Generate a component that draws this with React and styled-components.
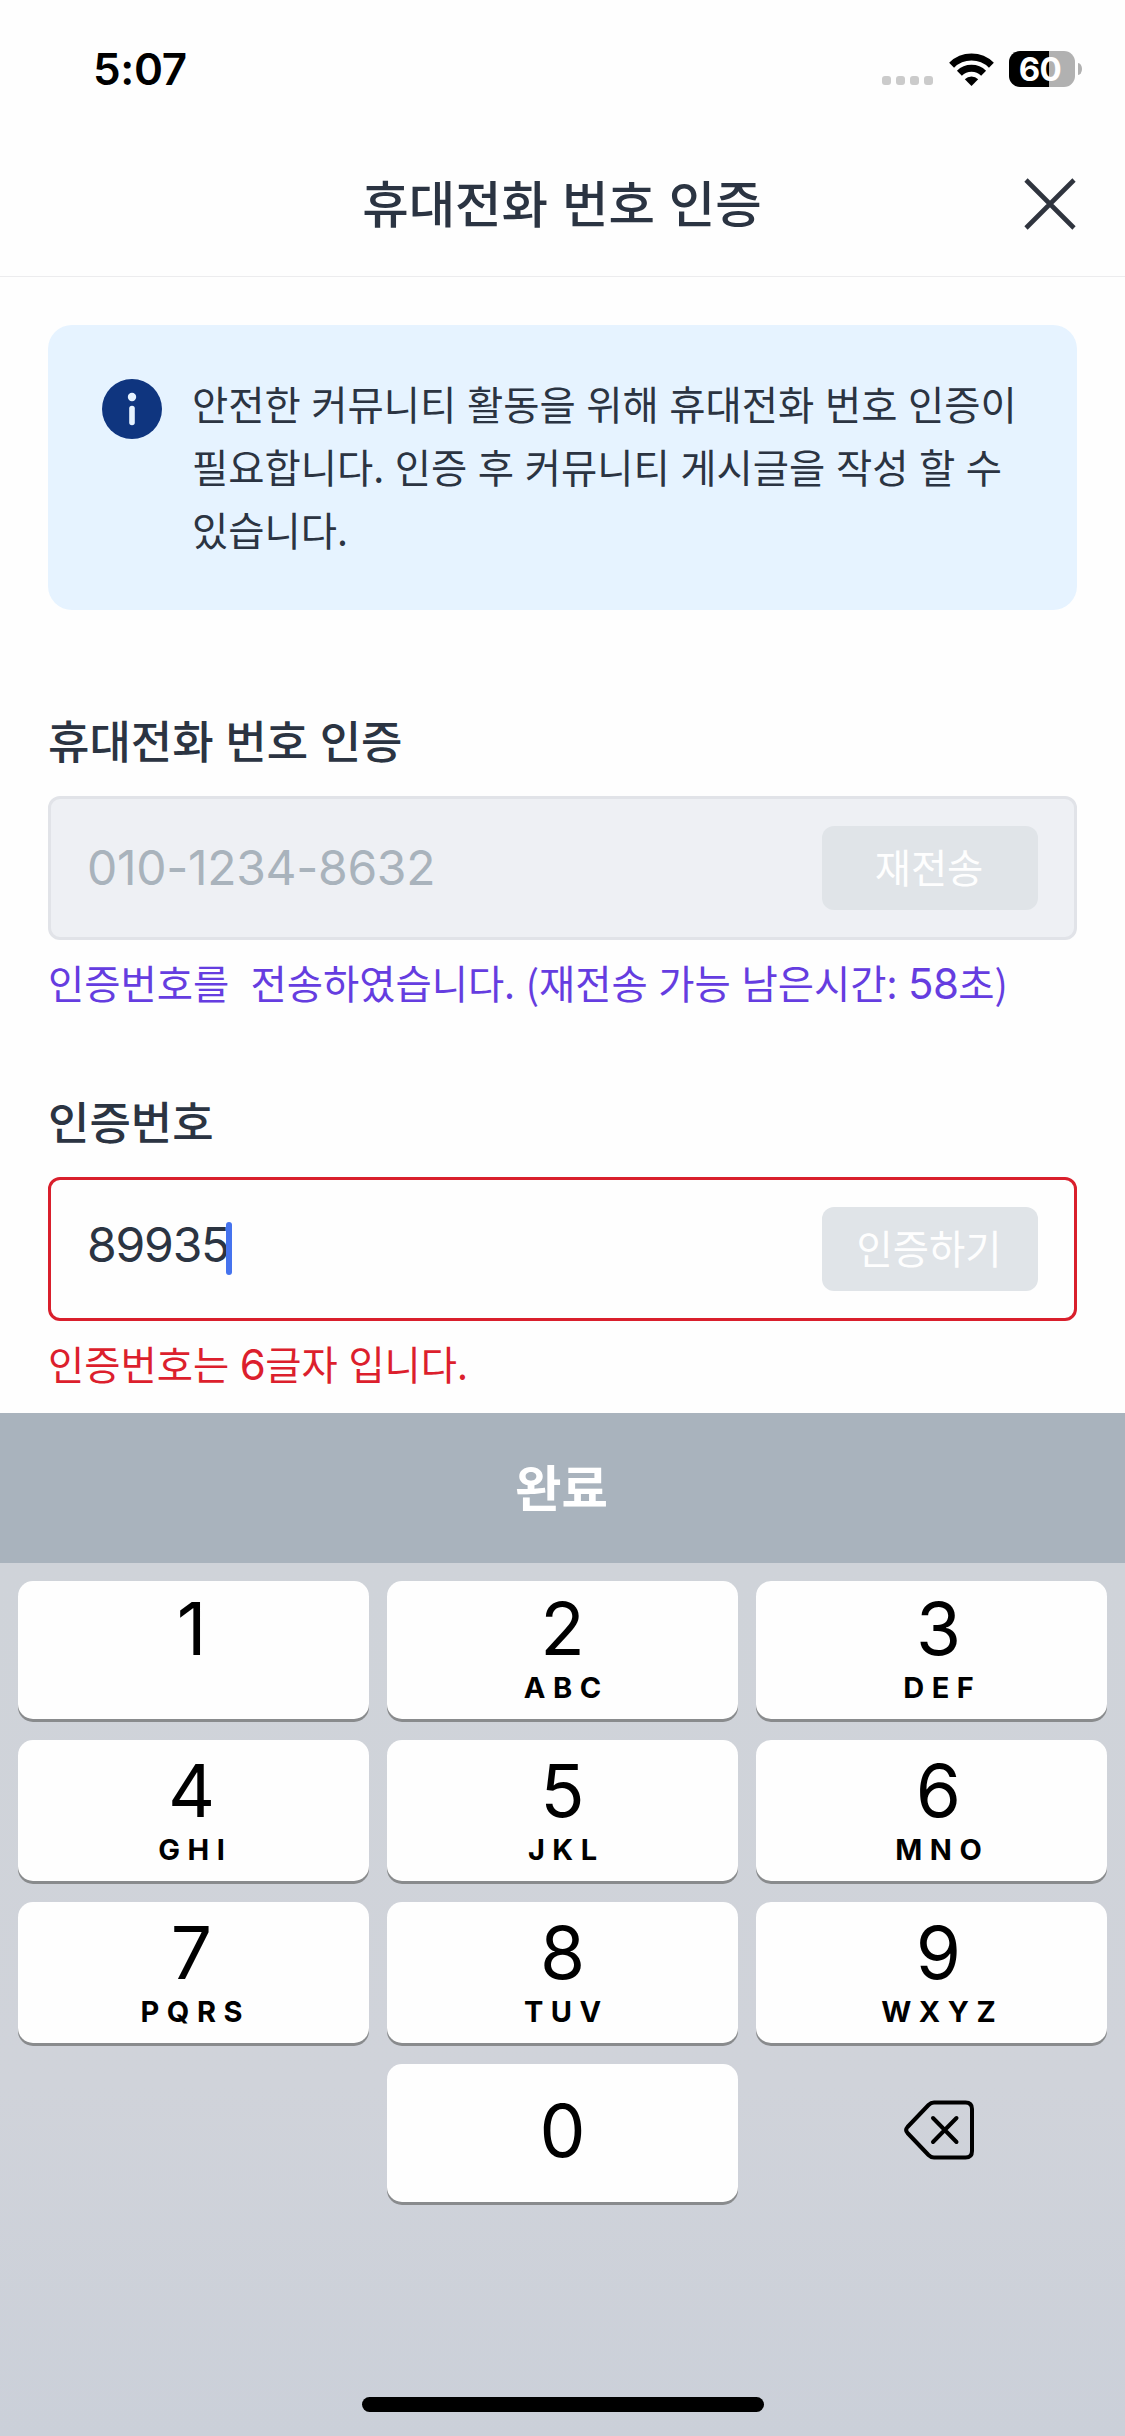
import { useState } from "react";
import styled, { createGlobalStyle } from "styled-components";

const GlobalStyle = createGlobalStyle`
  * {
    box-sizing: border-box;
  }

  body {
    margin: 0;
    background: #fdfdfe;
  }

  button {
    padding: 0;
    border: none;
    background: none;
    font-family: inherit;
  }
`;

const Screen = styled.div`
  display: flex;
  flex-direction: column;
  width: 1125px;
  height: 2436px;
  overflow: hidden;
  background: #fefefe;
  color: #2b3442;
  font-family: "Noto Sans CJK KR", "Noto Sans", sans-serif;
`;

const StatusBar = styled.div`
  display: flex;
  justify-content: space-between;
  align-items: flex-start;
  height: 132px;
  padding: 51px 43px 0 93px;
`;

const Time = styled.div`
  color: #000;
  font-family: Inter, sans-serif;
  font-size: 44px;
  font-weight: 600;
  letter-spacing: -0.4px;
  line-height: 36px;
`;

const StatusIcons = styled.div`
  display: flex;
  align-items: center;
  height: 36px;
`;

const SignalDots = styled.div`
  display: flex;
  gap: 5px;
  margin: 23px 16px 0 0;
`;

const Dot = styled.span`
  width: 9px;
  height: 9px;
  border-radius: 3px;
  background: #cbcbcb;
`;

const Battery = styled.div`
  display: flex;
  align-items: center;
  justify-content: center;
  width: 66px;
  height: 36px;
  margin: 0 3px 0 15px;
  padding-right: 4px;
  border-radius: 11px;
  background: linear-gradient(to right, #000 40px, #b1b1b1 40px);
  color: #fff;
  font-family: Inter, sans-serif;
  font-size: 33px;
  font-weight: 700;
  letter-spacing: -0.5px;
  line-height: 36px;
`;

const BatteryCap = styled.span`
  width: 4px;
  height: 12px;
  border-radius: 0 4px 4px 0 / 0 6px 6px 0;
  background: #b1b1b1;
`;

const Header = styled.header`
  display: grid;
  grid-template-columns: 1fr auto 1fr;
  align-items: center;
  height: 145px;
  padding: 0 48px;
  border-bottom: 1px solid #ececee;
`;

const Title = styled.h1`
  grid-column: 2;
  margin: 0 1px 6px 0;
  font-size: 50.5px;
  font-weight: 500;
  line-height: 75px;
  word-spacing: 2.6px;
`;

const CloseButton = styled.button`
  display: flex;
  justify-self: end;
`;

const Content = styled.main`
  display: flex;
  flex-direction: column;
  height: 1136px;
  padding: 48px 48px 0;
`;

const Notice = styled.section`
  display: flex;
  flex: none;
  gap: 30px;
  height: 285px;
  padding: 46px 30px 47px 54px;
  border-radius: 24px;
  background: #e6f3ff;

  svg {
    flex: none;
    margin-top: 8px;
  }
`;

const NoticeText = styled.p`
  margin: 0;
  font-size: 39.4px;
  line-height: 63px;
  word-spacing: 1.8px;
  white-space: pre-line;
`;

const Fields = styled.div`
  margin-top: 98px;
`;

const Field = styled.section`
  display: flex;
  flex-direction: column;
  height: 381px;
`;

const Label = styled.label`
  height: 88px;
  font-size: 45px;
  font-weight: 500;
  line-height: 64px;
  word-spacing: 1.5px;
`;

const InputBox = styled.div`
  display: flex;
  align-items: center;
  justify-content: space-between;
  height: 144px;
  padding: 0 36px;
  border: 3px solid ${(props) => (props.$error ? "#d91f2c" : "#e1e3e8")};
  border-radius: 12px;
  background: ${(props) => (props.$disabled ? "#eef0f4" : "#fefefe")};
`;

const Value = styled.div`
  display: flex;
  align-items: center;
  color: ${(props) => (props.$disabled ? "#a9b3bc" : "#2b3442")};
  font-family: Inter, sans-serif;
  font-size: 48px;
  letter-spacing: ${(props) => (props.$disabled ? "-0.3px" : "-1.2px")};
  line-height: 60px;
  margin-bottom: ${(props) => (props.$disabled ? "0" : "8px")};
`;

const Caret = styled.span`
  width: 6px;
  height: 53px;
  margin: 7px 0 0 -3px;
  border-radius: 3px;
  background: #4573ee;
`;

const SmallButton = styled.button`
  width: 216px;
  height: 84px;
  padding: 0 2px 4px 0;
  border-radius: 12px;
  background: #e0e4e8;
  color: #fefefe;
  font-size: 39.4px;
  line-height: 80px;
`;

const Helper = styled.p`
  height: 60px;
  margin: 12px 0 0;
  color: ${(props) => (props.$error ? "#dc1f2d" : "#653de0")};
  font-size: 39.4px;
  line-height: 60px;
  word-spacing: 1.8px;
  white-space: pre;
`;

const Latin = styled.span`
  font-family: Inter, sans-serif;
  font-size: 42px;
  letter-spacing: -0.6px;
  line-height: 1;
`;

const DoneButton = styled.button`
  height: 150px;
  padding: 0 2px 6px 0;
  background: #a9b3bd;
  color: #fff;
  font-size: 50.5px;
  font-weight: 700;
`;

const Keyboard = styled.div`
  display: flex;
  flex-direction: column;
  height: 873px;
  padding: 18px 18px 24px;
  background: linear-gradient(#cfd3d9, #d0d3da 60%, #cbd0d9);
`;

const Keys = styled.div`
  display: grid;
  grid-template-columns: repeat(3, 351px);
  grid-template-rows: 138px 141px 141px 138px;
  gap: 21px 18px;
`;

const Key = styled.button`
  display: flex;
  flex-direction: column;
  align-items: center;
  justify-content: ${(props) => (props.$center ? "center" : "flex-end")};
  padding: 0 ${(props) => (props.$col === 0 ? 4 : 0)}px
    ${(props) => (props.$center ? 5 : 13)}px
    ${(props) => (props.$col === 2 ? 14 : 0)}px;
  border-radius: 15px;
  background: #fefefe;
  box-shadow: 0 3px 0 #898b8d;
  color: #000;
`;

const EmptyKey = styled.div``;

const BackspaceKey = styled.button`
  display: flex;
  align-items: center;
  justify-content: center;
  padding: 0 0 7px 15px;
`;

const Digit = styled.span`
  font-family: Inter, sans-serif;
  font-size: 73px;
  line-height: 72px;
`;

const Letters = styled.span`
  height: 36px;
  margin: 5px -7.5px 0 0;
  font-family: Inter, sans-serif;
  font-size: 29px;
  font-weight: 700;
  letter-spacing: 7.5px;
  line-height: 36px;
`;

const HomeIndicator = styled.div`
  width: 402px;
  height: 15px;
  margin: auto auto 0;
  border-radius: 8px;
  background: #000;
`;

const keys = [
  { digit: "1", letters: "" },
  { digit: "2", letters: "ABC" },
  { digit: "3", letters: "DEF" },
  { digit: "4", letters: "GHI" },
  { digit: "5", letters: "JKL" },
  { digit: "6", letters: "MNO" },
  { digit: "7", letters: "PQRS" },
  { digit: "8", letters: "TUV" },
  { digit: "9", letters: "WXYZ" },
];

function WifiIcon() {
  return (
    <svg width="45" height="33" viewBox="0 0 45 33">
      <g fill="none" stroke="#000" strokeWidth="7">
        <path d="M2.6 12.2A28.4 28.4 0 0 1 42.4 12.2" />
        <path d="M10.4 20.2A17.2 17.2 0 0 1 34.6 20.2" />
      </g>
      <path d="M22.5 33L15.8 26.2A9.6 9.6 0 0 1 29.2 26.2Z" />
    </svg>
  );
}

function CloseIcon() {
  return (
    <svg width="54" height="54" viewBox="0 0 54 54">
      <path d="M3 3L51 51M51 3L3 51" stroke="#2f343e" strokeWidth="4.6" />
    </svg>
  );
}

function InfoIcon() {
  return (
    <svg width="60" height="60" viewBox="0 0 60 60">
      <circle cx="30" cy="30" r="30" fill="#0f357f" />
      <circle cx="30" cy="18" r="4.2" fill="#e6f3ff" />
      <path
        d="M30 29.5V43.5"
        stroke="#e6f3ff"
        strokeWidth="5.6"
        strokeLinecap="round"
      />
    </svg>
  );
}

function BackspaceIcon() {
  return (
    <svg width="70" height="60" viewBox="0 0 70 60">
      <g
        fill="none"
        stroke="#000"
        strokeWidth="4"
        strokeLinecap="round"
        strokeLinejoin="round"
      >
        <path d="M30 2.5H61.5Q68 2.5 68 9V51Q68 57.5 61.5 57.5H30Q27 57.5 24.5 55L3.5 33Q0.8 30 3.5 27L24.5 5Q27 2.5 30 2.5Z" />
        <path d="M29 18L52.5 42M52.5 18L29 42" />
      </g>
    </svg>
  );
}

function App() {
  const [code, setCode] = useState("89935");

  const handlePress = (digit) => {
    if (code.length < 6) {
      setCode(code + digit);
    }
  };

  const handleDelete = () => {
    setCode(code.slice(0, -1));
  };

  return (
    <>
      <GlobalStyle />
      <Screen>
        <StatusBar>
          <Time>5:07</Time>
          <StatusIcons>
            <SignalDots>
              <Dot />
              <Dot />
              <Dot />
              <Dot />
            </SignalDots>
            <WifiIcon />
            <Battery>60</Battery>
            <BatteryCap />
          </StatusIcons>
        </StatusBar>
        <Header>
          <Title>휴대전화 번호 인증</Title>
          <CloseButton>
            <CloseIcon />
          </CloseButton>
        </Header>
        <Content>
          <Notice>
            <InfoIcon />
            <NoticeText>
              {
                "안전한 커뮤니티 활동을 위해 휴대전화 번호 인증이\n필요합니다. 인증 후 커뮤니티 게시글을 작성 할 수\n있습니다."
              }
            </NoticeText>
          </Notice>
          <Fields>
            <Field>
              <Label>휴대전화 번호 인증</Label>
              <InputBox $disabled>
                <Value $disabled>010-1234-8632</Value>
                <SmallButton>재전송</SmallButton>
              </InputBox>
              <Helper>
                {"인증번호를  전송하였습니다. (재전송 가능 남은시간: "}
                <Latin>58</Latin>초)
              </Helper>
            </Field>
            <Field>
              <Label>인증번호</Label>
              <InputBox $error>
                <Value>
                  {code}
                  <Caret />
                </Value>
                <SmallButton>인증하기</SmallButton>
              </InputBox>
              <Helper $error>
                {"인증번호는 "}
                <Latin>6</Latin>
                {"글자 입니다."}
              </Helper>
            </Field>
          </Fields>
        </Content>
        <DoneButton>완료</DoneButton>
        <Keyboard>
          <Keys>
            {keys.map((key, index) => (
              <Key
                key={key.digit}
                $col={index % 3}
                onClick={() => handlePress(key.digit)}
              >
                <Digit>{key.digit}</Digit>
                <Letters>{key.letters}</Letters>
              </Key>
            ))}
            <EmptyKey />
            <Key $center onClick={() => handlePress("0")}>
              <Digit>0</Digit>
            </Key>
            <BackspaceKey onClick={handleDelete}>
              <BackspaceIcon />
            </BackspaceKey>
          </Keys>
          <HomeIndicator />
        </Keyboard>
      </Screen>
    </>
  );
}

export default App;
